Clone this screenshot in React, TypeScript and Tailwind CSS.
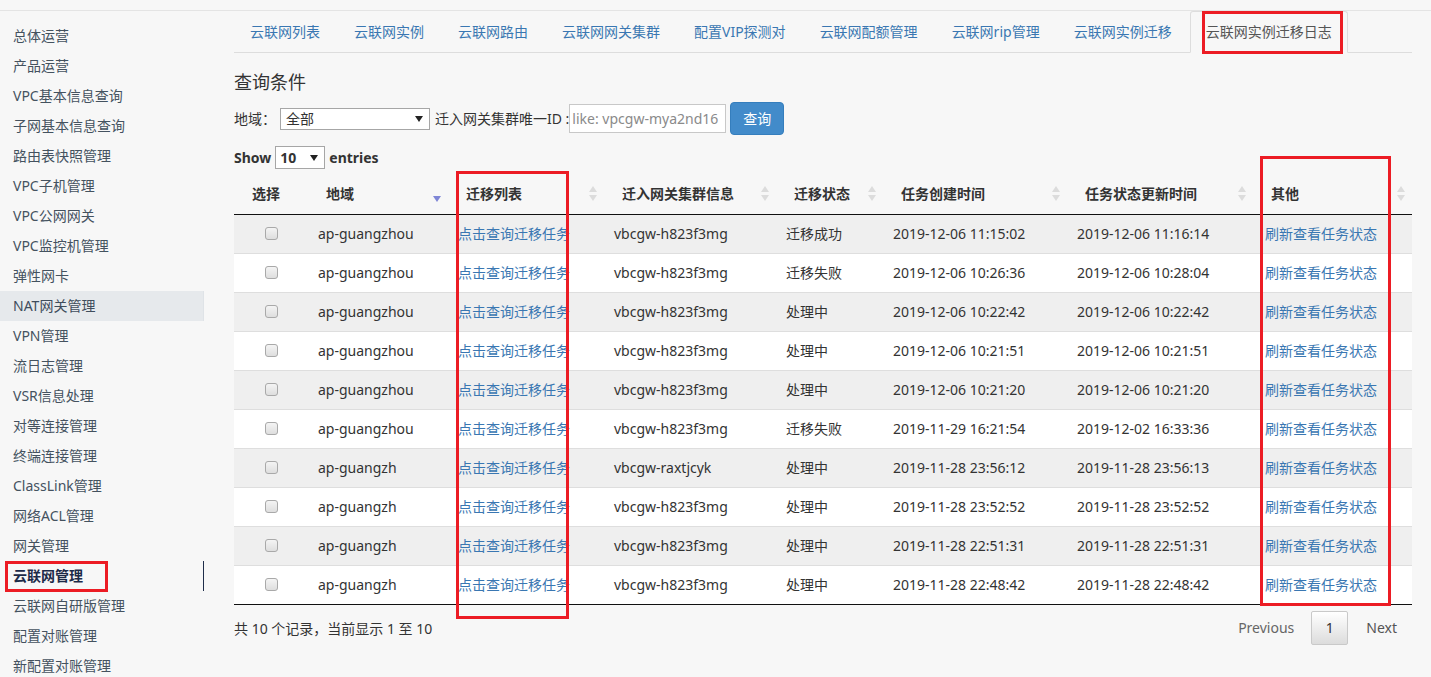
import React from "react";

const menu = [
  "总体运营",
  "产品运营",
  "VPC基本信息查询",
  "子网基本信息查询",
  "路由表快照管理",
  "VPC子机管理",
  "VPC公网网关",
  "VPC监控机管理",
  "弹性网卡",
  "NAT网关管理",
  "VPN管理",
  "流日志管理",
  "VSR信息处理",
  "对等连接管理",
  "终端连接管理",
  "ClassLink管理",
  "网络ACL管理",
  "网关管理",
  "云联网管理",
  "云联网自研版管理",
  "配置对账管理",
  "新配置对账管理",
];

const tabs = [
  "云联网列表",
  "云联网实例",
  "云联网路由",
  "云联网网关集群",
  "配置VIP探测对",
  "云联网配额管理",
  "云联网rip管理",
  "云联网实例迁移",
  "云联网实例迁移日志",
];

const rows = [
  { region: "ap-guangzhou", gw: "vbcgw-h823f3mg", status: "迁移成功", created: "2019-12-06 11:15:02", updated: "2019-12-06 11:16:14" },
  { region: "ap-guangzhou", gw: "vbcgw-h823f3mg", status: "迁移失败", created: "2019-12-06 10:26:36", updated: "2019-12-06 10:28:04" },
  { region: "ap-guangzhou", gw: "vbcgw-h823f3mg", status: "处理中", created: "2019-12-06 10:22:42", updated: "2019-12-06 10:22:42" },
  { region: "ap-guangzhou", gw: "vbcgw-h823f3mg", status: "处理中", created: "2019-12-06 10:21:51", updated: "2019-12-06 10:21:51" },
  { region: "ap-guangzhou", gw: "vbcgw-h823f3mg", status: "处理中", created: "2019-12-06 10:21:20", updated: "2019-12-06 10:21:20" },
  { region: "ap-guangzhou", gw: "vbcgw-h823f3mg", status: "迁移失败", created: "2019-11-29 16:21:54", updated: "2019-12-02 16:33:36" },
  { region: "ap-guangzh", gw: "vbcgw-raxtjcyk", status: "处理中", created: "2019-11-28 23:56:12", updated: "2019-11-28 23:56:13" },
  { region: "ap-guangzh", gw: "vbcgw-h823f3mg", status: "处理中", created: "2019-11-28 23:52:52", updated: "2019-11-28 23:52:52" },
  { region: "ap-guangzh", gw: "vbcgw-h823f3mg", status: "处理中", created: "2019-11-28 22:51:31", updated: "2019-11-28 22:51:31" },
  { region: "ap-guangzh", gw: "vbcgw-h823f3mg", status: "处理中", created: "2019-11-28 22:48:42", updated: "2019-11-28 22:48:42" },
];

const cols = [
  { title: "选择", w: 74, sort: "none" },
  { title: "地域", w: 140, sort: "desc" },
  { title: "迁移列表", w: 156, sort: "both" },
  { title: "迁入网关集群信息", w: 172, sort: "both" },
  { title: "迁移状态", w: 107, sort: "both" },
  { title: "任务创建时间", w: 184, sort: "both" },
  { title: "任务状态更新时间", w: 186, sort: "both" },
  { title: "其他", w: 159, sort: "both" },
];

function SortIcon({ kind }: { kind: string }) {
  if (kind === "none") return null;
  if (kind === "desc") {
    return (
      <svg width="10" height="19" viewBox="0 0 10 19" className="shrink-0">
        <path d="M1 12 L9 12 L5 18 Z" fill="#7f86d6" />
      </svg>
    );
  }
  return (
    <svg width="10" height="19" viewBox="0 0 10 19" className="shrink-0">
      <path d="M5 2 L9 8 L1 8 Z" fill="#dcdcdc" />
      <path d="M1 11 L9 11 L5 17 Z" fill="#dcdcdc" />
    </svg>
  );
}

function Caret() {
  return (
    <svg width="8" height="6" viewBox="0 0 8 6">
      <path d="M0 0 L8 0 L4 6 Z" fill="#222" />
    </svg>
  );
}

export default function App() {
  return (
    <div
      className="relative min-h-screen bg-[#f7f7f7] text-[14px] text-[#333] overflow-hidden"
      style={{ fontFamily: '"Noto Sans", "Noto Sans CJK SC", sans-serif' }}
    >
      <div className="h-[11px] border-b border-[#e4e4e4]" />

      <div className="flex">
        {/* sidebar */}
        <aside className="w-[204px] shrink-0 pt-[10px]">
          {menu.map((m) => {
            const hover = m === "NAT网关管理";
            const active = m === "云联网管理";
            return (
              <div
                key={m}
                className={`h-[30px] leading-[30px] pl-[13px] whitespace-nowrap border-r ${
                  hover
                    ? "bg-[#e6e9ec] border-[#dfe3e7] text-[#3f4d5c]"
                    : active
                    ? "border-[#1f2d4a] font-bold text-[#1c2a48]"
                    : "border-transparent text-[#44525f]"
                }`}
              >
                {m}
              </div>
            );
          })}
        </aside>

        {/* main */}
        <main className="flex-1 pl-[30px] pr-[19px]">
          <ul className="flex border-b border-[#dddddd] h-[42px]">
            {tabs.map((t, i) => {
              const active = i === tabs.length - 1;
              return (
                <li key={t} className="mr-[2px] -mb-px">
                  <div
                    className={`px-[15px] py-[10px] leading-[20px] border rounded-t-[3px] whitespace-nowrap ${
                      active
                        ? "border-[#dddddd] border-b-[#f7f7f7] bg-[#f7f7f7] text-[#555]"
                        : "border-transparent text-[#3a77b2]"
                    }`}
                  >
                    {t}
                  </div>
                </li>
              );
            })}
          </ul>

          <h3 className="mt-[17px] text-[18px] leading-[24px] text-[#333]">查询条件</h3>

          <div className="mt-[8px] flex items-center h-[33px]">
            <span>地域：</span>
            <div className="ml-[4px] w-[150px] h-[22px] bg-white border border-[#a6a6a6] flex items-center justify-between pl-[5px] pr-[6px]">
              <span className="leading-none">全部</span>
              <Caret />
            </div>
            <span className="ml-[5px] whitespace-nowrap">迁入网关集群唯一ID :</span>
            <input
              className="w-[157px] h-[29px] bg-white border border-[#c8c8c8] pl-[2px] text-[14px] placeholder:text-[#8a8a8a] outline-none"
              placeholder="like: vpcgw-mya2nd16"
            />
            <button className="ml-[4px] w-[54px] h-[33px] rounded-[4px] bg-[#428bca] border border-[#357ebd] text-white">
              查询
            </button>
          </div>

          <div className="mt-[11px] flex items-center h-[23px] font-bold">
            <span>Show</span>
            <div className="ml-[4px] w-[50px] h-[23px] bg-white border border-[#a6a6a6] flex items-center justify-between pl-[4px] pr-[6px]">
              <span className="leading-none">10</span>
              <Caret />
            </div>
            <span className="ml-[4px]">entries</span>
          </div>

          <table className="mt-[5px] w-full table-fixed border-collapse">
            <colgroup>
              {cols.map((c) => (
                <col key={c.title} style={{ width: c.w }} />
              ))}
            </colgroup>
            <thead>
              <tr className="h-[40px] border-b border-[#111]">
                {cols.map((c) => (
                  <th key={c.title} className="p-0 font-bold text-left">
                    <div className="flex items-center justify-between pl-[18px] pr-[6px]">
                      <span className="whitespace-nowrap">{c.title}</span>
                      <SortIcon kind={c.sort} />
                    </div>
                  </th>
                ))}
              </tr>
            </thead>
            <tbody>
              {rows.map((r, i) => (
                <tr
                  key={i}
                  className={`h-[39px] ${i % 2 === 0 ? "bg-[#efefef]" : "bg-white"} ${
                    i === rows.length - 1 ? "border-b border-[#111]" : "border-b border-[#dedede]"
                  }`}
                >
                  <td className="p-0">
                    <div className="flex justify-center">
                      <span className="block w-[13px] h-[13px] rounded-[3px] border border-[#a9a9a9] bg-gradient-to-b from-[#f4f4f4] to-[#dedede]" />
                    </div>
                  </td>
                  <td className="px-[10px] whitespace-nowrap">{r.region}</td>
                  <td className="px-[10px] whitespace-nowrap text-[#3a77b2] overflow-visible">点击查询迁移任务</td>
                  <td className="px-[10px] whitespace-nowrap">{r.gw}</td>
                  <td className="px-[10px] whitespace-nowrap">{r.status}</td>
                  <td className="px-[10px] whitespace-nowrap">{r.created}</td>
                  <td className="px-[10px] whitespace-nowrap">{r.updated}</td>
                  <td className="pl-[12px] pr-[8px] whitespace-nowrap text-[#3a77b2]">刷新查看任务状态</td>
                </tr>
              ))}
            </tbody>
          </table>

          <div className="mt-[6px] flex items-center justify-between h-[34px]">
            <span className="pt-[1px]">共 10 个记录，当前显示 1 至 10</span>
            <div className="flex items-center pr-[15px]">
              <span className="text-[#666] mr-[17px]">Previous</span>
              <span className="w-[37px] h-[34px] flex items-center justify-center rounded-[2px] border border-[#c9c9c9] bg-gradient-to-b from-[#ffffff] to-[#dcdcdc] text-[#333]">
                1
              </span>
              <span className="ml-[18px] text-[#555]">Next</span>
            </div>
          </div>
        </main>
      </div>

      {/* red annotation boxes */}
      <div className="absolute left-[1202px] top-[11px] w-[141px] h-[43px] border-[3px] border-[#ec1c24]" />
      <div className="absolute left-[5px] top-[561px] w-[103px] h-[31px] border-[3px] border-[#ec1c24]" />
      <div className="absolute left-[456px] top-[171px] w-[113px] h-[448px] border-[3px] border-[#ec1c24]" />
      <div className="absolute left-[1260px] top-[156px] w-[131px] h-[450px] border-[3px] border-[#ec1c24]" />
    </div>
  );
}
